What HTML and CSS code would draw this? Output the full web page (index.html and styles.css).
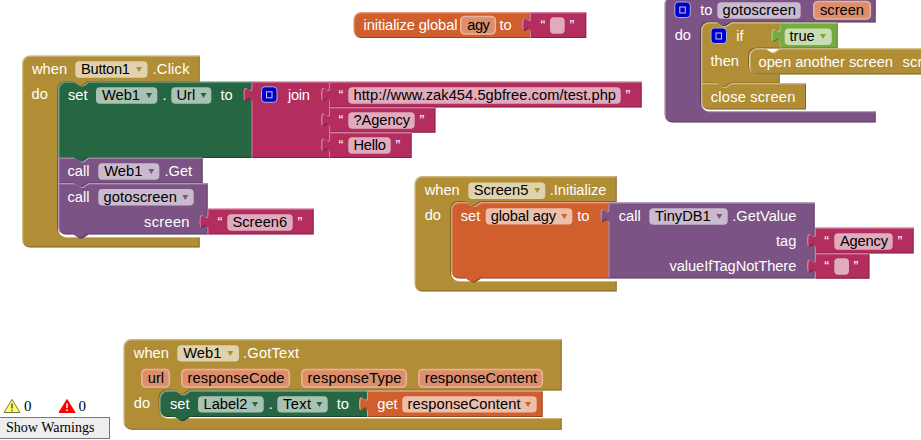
FILE: index.html
```html
<!DOCTYPE html>
<html lang="en">
<head>
<meta charset="utf-8">
<title>Blocks</title>
<link rel="stylesheet" href="styles.css">
</head>
<body>
<main class="workspace">
<svg class="canvas" width="921" height="440" viewBox="0 0 921 440">
  <defs>
    <filter id="bevel" x="-5%" y="-10%" width="110%" height="120%" color-interpolation-filters="sRGB">
      <feOffset in="SourceAlpha" dx="1.4" dy="1.4" result="down"/>
      <feFlood flood-color="#fff" flood-opacity=".38"/>
      <feComposite in2="SourceAlpha" operator="in"/>
      <feComposite in2="down" operator="out" result="light"/>
      <feOffset in="SourceAlpha" dx="-1" dy="-1" result="up"/>
      <feFlood flood-color="#000" flood-opacity=".28"/>
      <feComposite in2="SourceAlpha" operator="in"/>
      <feComposite in2="up" operator="out" result="dark"/>
      <feMerge><feMergeNode in="SourceGraphic"/><feMergeNode in="dark"/><feMergeNode in="light"/></feMerge>
    </filter>
    <path id="arrow" d="M-3 -2H3L0 3Z"/>
    <g id="mutator"><rect class="mutator" x=".5" y=".5" width="15.5" height="15.5" rx="3.5"/><rect class="mutator-glyph" x="5.5" y="5.5" width="5.5" height="6"/></g>
  </defs>

  <!-- initialize global agy -->
  <g>
    <path class="block orange" d="M361.5 12H531V38H361.5a8 8 0 0 1-8-8V20a8 8 0 0 1 8-8Z"/>
    <text x="363.500" y="30" textLength="94">initialize global</text>
    <rect class="param" x="460.8" y="16.5" width="34.5" height="17.5" rx="4"/><text class="ink" x="467.300" y="30" textLength="22.500">agy</text>
    <text x="499.500" y="30">to</text>
    <path class="block pink" d="M530 12H586.3V38H530V32c0-10-8 8-8-7.500s8 2.500 8-7.500Z"/>
    <text x="540.5" y="30">“</text><rect class="field" x="550" y="17.300" width="14.700" height="16.400" rx="4"/><text x="569.5" y="30">”</text>
  </g>

  <!-- when Button1.Click -->
  <g>
    <path class="block gold" d="M30 55.500H199.700V82H88.500l-6 4h-3l-6-4H66a8 8 0 0 0-8 8V229a8 8 0 0 0 8 8H199.700V247.500H30a8 8 0 0 1-8-8V63.500a8 8 0 0 1 8-8Z"/>
    <text x="32" y="74">when</text>
    <rect class="field" x="75.300" y="61.300" width="72.200" height="16.400" rx="4"/><text class="ink" x="81" y="74" textLength="49">Button1</text><use class="gold" href="#arrow" x="139" y="69"/>
    <text x="152.500" y="74" textLength="37">.Click</text>
    <text x="31.500" y="99">do</text>

    <path class="block green" d="M66 81.500H73.500l6 4h3l6-4H253V158H88.500l-6 4h-3l-6-4H58V89.500a8 8 0 0 1 8-8Z"/>
    <text x="68" y="100">set</text>
    <rect class="field" x="96" y="87.300" width="61.300" height="16.400" rx="4"/><text class="ink" x="102" y="100">Web1</text><use class="green" href="#arrow" x="149" y="95"/>
    <text x="162.500" y="100">.</text>
    <rect class="field" x="171.300" y="87.300" width="40" height="16.400" rx="4"/><text class="ink" x="176.500" y="100">Url</text><use class="green" href="#arrow" x="203.500" y="95"/>
    <text x="220.500" y="100">to</text>

    <path class="block pink" d="M251.500 81.500H330V158H251.500V102c0-10-8 8-8-7.500s8 2.500 8-7.500Z"/>
    <use href="#mutator" x="261" y="86.300"/>
    <text x="288" y="100" textLength="22">join</text>
    <path class="block pink" d="M329 81.500H641.700V107.500H329V102c0-10-8 8-8-7.500s8 2.500 8-7.500Z"/>
    <text x="338.500" y="100">“</text><rect class="field" x="348.300" y="87.300" width="272.400" height="16.400" rx="4"/><text class="ink" x="353.500" y="100" textLength="262.500">http://www.zak454.5gbfree.com/test.php</text><text x="625.500" y="100">”</text>
    <path class="block pink" d="M329 107H435.500V132.700H329V127.500c0-10-8 8-8-7.500s8 2.500 8-7.500Z"/>
    <text x="338.500" y="125">“</text><rect class="field" x="348.300" y="112.300" width="66.400" height="16.400" rx="4"/><text class="ink" x="353.500" y="125" textLength="56.500">?Agency</text><text x="419.500" y="125">”</text>
    <path class="block pink" d="M329 132H411.700V158H329V152.500c0-10-8 8-8-7.500s8 2.500 8-7.500Z"/>
    <text x="338.500" y="150">“</text><rect class="field" x="348.300" y="137.300" width="42.400" height="16.400" rx="4"/><text class="ink" x="353.500" y="150" textLength="32.500">Hello</text><text x="395.500" y="150">”</text>

    <path class="block purple" d="M58 157.500H73.500l6 4h3l6-4H202.700V183.500H88.500l-6 4h-3l-6-4H58Z"/>
    <text x="67.500" y="176">call</text>
    <rect class="field" x="98.300" y="163.300" width="61" height="16.400" rx="4"/><text class="ink" x="104.300" y="176">Web1</text><use class="purple" href="#arrow" x="151.300" y="171"/>
    <text x="164.500" y="176">.Get</text>

    <path class="block purple" d="M58 183H73.500l6 4h3l6-4H207.700V234.500H88.500l-6 4h-3l-6-4H66a8 8 0 0 1-8-8Z"/>
    <text x="67.500" y="202">call</text>
    <rect class="field" x="98.300" y="189.100" width="95.400" height="16.400" rx="4"/><text class="ink" x="103.500" y="202" textLength="73.500">gotoscreen</text><use class="purple" href="#arrow" x="185.300" y="197"/>
    <text x="144" y="227" textLength="45.500">screen</text>
    <path class="block pink" d="M207.500 208.500H313.700V234.500H207.500V229c0-10-8 8-8-7.500s8 2.500 8-7.500Z"/>
    <text x="217.500" y="227">“</text><rect class="field" x="227.300" y="214.300" width="65.400" height="16.400" rx="4"/><text class="ink" x="232.500" y="227">Screen6</text><text x="297.500" y="227">”</text>
  </g>

  <!-- to gotoscreen -->
  <g>
    <path class="block purple" d="M672.500 -4H875.700V22.500H731.500l-6 4h-3l-6-4H709a8 8 0 0 0-8 8V103.300a8 8 0 0 0 8 8H875.700V122.500H672.500a8 8 0 0 1-8-8V4a8 8 0 0 1 8-8Z"/>
    <use href="#mutator" x="674.300" y="1.500"/>
    <text x="700.300" y="15">to</text>
    <rect class="field" x="717.300" y="2.300" width="83.400" height="16.400" rx="4"/><text class="ink" x="722.500" y="15" textLength="73.500">gotoscreen</text>
    <rect class="param" x="813.800" y="1.500" width="56.500" height="17.500" rx="4"/><text class="ink" x="820" y="15">screen</text>
    <text x="674.700" y="40">do</text>

    <path class="block gold" d="M709 22.300H716.500l6 4h3l6-4H780V48.500H757a8 8 0 0 0-8 8V66a8 8 0 0 0 8 8H779.700V83.500H731.500l-6 4h-3l-6-4H701V30.300a8 8 0 0 1 8-8Z"/>
    <use href="#mutator" x="710.500" y="27.500"/>
    <text x="736.300" y="41">if</text>
    <text x="710.500" y="66">then</text>
    <path class="block lime" d="M779.500 22.500H837.700V48.500H779.500V43c0-10-8 8-8-7.500s8 2.500 8-7.500Z"/>
    <rect class="field" x="784.700" y="28.500" width="47" height="16.400" rx="4"/><text class="ink" x="789.500" y="41">true</text><use class="lime" href="#arrow" x="823" y="36"/>
    <path class="block gold" d="M757.500 48.200H765l6 4h3l6-4H960V74.500H757.500a8 8 0 0 1-8-8V56.200a8 8 0 0 1 8-8Z"/>
    <text x="758.500" y="67">open another screen</text><text x="902.500" y="67" textLength="20">scr</text>
    <path class="block gold" d="M701 83H716.500l6 4h3l6-4H806V109.500H709a8 8 0 0 1-8-8Z"/>
    <text x="710.800" y="102" textLength="84.500">close screen</text>
  </g>

  <!-- when Screen5.Initialize -->
  <g>
    <path class="block gold" d="M422.500 176H616.700V202H481l-6 4h-3l-6-4H459a8 8 0 0 0-8 8V273a8 8 0 0 0 8 8H616.700V291.600H422.500a8 8 0 0 1-8-8V184a8 8 0 0 1 8-8Z"/>
    <text x="424.700" y="195">when</text>
    <rect class="field" x="468.300" y="182.500" width="77" height="16.400" rx="4"/><text class="ink" x="473.700" y="195">Screen5</text><use class="gold" href="#arrow" x="537.300" y="190"/>
    <text x="549.800" y="195" textLength="56.500">.Initialize</text>
    <text x="424.700" y="220">do</text>
    <path class="block orange" d="M459 202H466l6 4h3l6-4H610V278.500H481l-6 4h-3l-6-4H459a8 8 0 0 1-8-8V210a8 8 0 0 1 8-8Z"/>
    <text x="460.700" y="221">set</text>
    <rect class="field" x="485.700" y="208.200" width="86.600" height="16.400" rx="4"/><text class="ink" x="490.700" y="221" textLength="65.500">global agy</text><use class="orange" href="#arrow" x="564.300" y="216"/>
    <text x="577.300" y="221">to</text>
    <path class="block purple" d="M608.500 202.200H814.700V278.500H608.500V223c0-10-8 8-8-7.500s8 2.500 8-7.500Z"/>
    <text x="618.700" y="221">call</text>
    <rect class="field" x="649.300" y="208.300" width="78.400" height="16.400" rx="4"/><text class="ink" x="655" y="221">TinyDB1</text><use class="purple" href="#arrow" x="719.300" y="216"/>
    <text x="732.300" y="221">.GetValue</text>
    <text class="end" x="796.300" y="246">tag</text>
    <text x="669.500" y="271" textLength="126.800">valueIfTagNotThere</text>
    <path class="block pink" d="M815 227.500H913.700V253.500H815V248c0-10-8 8-8-7.500s8 2.500 8-7.500Z"/>
    <text x="824.300" y="246">“</text><rect class="field" x="834.300" y="233.300" width="58.400" height="16.400" rx="4"/><text class="ink" x="840" y="246" textLength="48">Agency</text><text x="897.500" y="246">”</text>
    <path class="block pink" d="M815 253H869.500V278.700H815V273.500c0-10-8 8-8-7.500s8 2.500 8-7.500Z"/>
    <text x="824.300" y="271">“</text><rect class="field" x="834.300" y="258.300" width="14.700" height="16.400" rx="4"/><text x="853.500" y="271">”</text>
  </g>

  <!-- when Web1.GotText -->
  <g>
    <path class="block gold" d="M131.500 339H561.700V390.500H190l-6 4h-3l-6-4H167.500a8 8 0 0 0-8 8V410a8 8 0 0 0 8 8H561.700V429.700H131.500a8 8 0 0 1-8-8V347a8 8 0 0 1 8-8Z"/>
    <text x="133.800" y="358">when</text>
    <rect class="field" x="177.300" y="345.200" width="61.700" height="16.400" rx="4"/><text class="ink" x="183.300" y="358">Web1</text><use class="gold" href="#arrow" x="230.300" y="353"/>
    <text x="243" y="358" textLength="56">.GotText</text>
    <rect class="param" x="141.800" y="369.500" width="27.500" height="17.500" rx="4"/><text class="ink" x="147.800" y="383">url</text>
    <rect class="param" x="181.800" y="369.500" width="107.500" height="17.500" rx="4"/><text class="ink" x="187.500" y="383" textLength="97">responseCode</text>
    <rect class="param" x="301.800" y="369.500" width="104.500" height="17.500" rx="4"/><text class="ink" x="307.500" y="383" textLength="94">responseType</text>
    <rect class="param" x="418.800" y="369.500" width="123.500" height="17.500" rx="4"/><text class="ink" x="424.700" y="383" textLength="112.500">responseContent</text>
    <text x="133.800" y="408">do</text>
    <path class="block green" d="M167.500 390.500H175l6 4h3l6-4H368V417H190l-6 4h-3l-6-4H167.500a8 8 0 0 1-8-8V398.500a8 8 0 0 1 8-8Z"/>
    <text x="170" y="409">set</text>
    <rect class="field" x="198" y="396.200" width="65.700" height="16.400" rx="4"/><text class="ink" x="203.500" y="409">Label2</text><use class="green" href="#arrow" x="255" y="404"/>
    <text x="268.800" y="409">.</text>
    <rect class="field" x="277.300" y="396.200" width="50.400" height="16.400" rx="4"/><text class="ink" x="283" y="409" textLength="28">Text</text><use class="green" href="#arrow" x="319.300" y="404"/>
    <text x="336.700" y="409">to</text>
    <path class="block orange" d="M367 390.700H542.700V417H367V411.500c0-10-8 8-8-7.500s8 2.500 8-7.500Z"/>
    <text x="377.300" y="409">get</text>
    <rect class="field" x="402.300" y="396.200" width="134.400" height="16.400" rx="4"/><text class="ink" x="407.500" y="409" textLength="113">responseContent</text><use class="orange" href="#arrow" x="528" y="404"/>
  </g>
</svg>

<aside class="warnings">
  <div class="counts">
    <span class="count"><svg class="sign" width="18" height="16" viewBox="0 0 18 16"><path class="sign-yellow" d="M9 1.500L17 14.500H1Z"/><path class="mark-dark" d="M9 5.500V10.500M9 11.800V13.300"/></svg>0</span>
    <span class="count"><svg class="sign" width="18" height="16" viewBox="0 0 18 16"><path class="sign-red" d="M9 1.500L17 14.500H1Z"/><path class="mark-light" d="M9 5.500V10M9 11.300V13"/></svg>0</span>
  </div>
  <button class="toggle" type="button">Show Warnings</button>
</aside>
</main>
</body>
</html>
```
FILE: styles.css
```css
body {
  margin: 0;
  background: #fff;
  overflow: hidden;
}

.workspace {
  position: relative;
  width: 921px;
  height: 440px;
  overflow: hidden;
}

.canvas {
  display: block;
  font-family: "Liberation Sans", Arial, sans-serif;
  font-size: 14.667px;
}

.canvas text { fill: #fff; }
.canvas text.ink { fill: #000; }
.canvas text.end { text-anchor: end; }

.block { filter: url(#bevel); }
.gold { fill: #b18e35; }
.green { fill: #266643; }
.purple { fill: #7c5385; }
.pink { fill: #b32d5e; }
.orange { fill: #d05f2d; }
.lime { fill: #77ab41; }

.field { fill: #fff; fill-opacity: .6; }
.param { fill: #dd8f6c; stroke: #e9b29b; stroke-width: 1.6; }
.mutator { fill: #0000c8; stroke: #a9b0e4; stroke-width: 1; }
.mutator-glyph { fill: none; stroke: #ccd; stroke-width: 1; }

.warnings {
  position: absolute;
  left: 0;
  bottom: 1px;
  width: 110px;
  font-family: "Liberation Serif", "Times New Roman", serif;
  color: #000;
}

.counts {
  display: flex;
  gap: 26px;
  padding: 0 0 2px 3px;
}

.count {
  display: flex;
  align-items: center;
  gap: 3px;
  font-size: 15px;
  line-height: 18px;
}

.sign { display: block; }
.sign-yellow { fill: #ffff5a; stroke: #77773c; stroke-linejoin: round; }
.sign-red { fill: #f00; stroke: #f00; stroke-linejoin: round; }
.mark-dark { fill: none; stroke: #555; stroke-width: 1.500; }
.mark-light { fill: none; stroke: #fff; stroke-width: 1.500; }

.toggle {
  display: block;
  box-sizing: border-box;
  width: 110px;
  height: 22px;
  margin: 0;
  padding: 0 0 1px 6px;
  border: 1px solid #777;
  border-left: 0;
  background: #eee;
  font: 14px/19px "Liberation Serif", "Times New Roman", serif;
  color: #000;
  text-align: left;
}
```
